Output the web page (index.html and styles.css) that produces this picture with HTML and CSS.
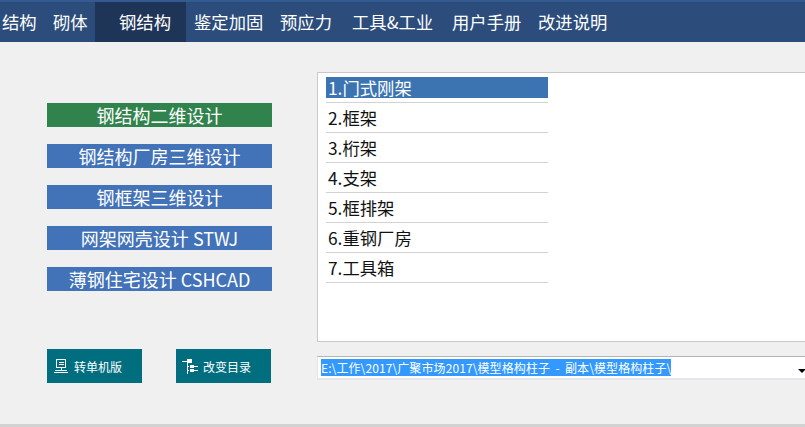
FILE: index.html
```html
<!DOCTYPE html>
<html lang="zh-CN">
<head>
<meta charset="utf-8">
<title>钢结构</title>
<link rel="stylesheet" href="styles.css">
</head>
<body>
<div class="app">
  <nav class="nav">
    <span class="tab t1">结构</span>
    <span class="tab t2">砌体</span>
    <span class="tab t3 active">钢结构</span>
    <span class="tab t4">鉴定加固</span>
    <span class="tab t5">预应力</span>
    <span class="tab t6">工具&amp;工业</span>
    <span class="tab t7">用户手册</span>
    <span class="tab t8">改进说明</span>
  </nav>
  <main class="main">
    <div class="left">
      <div class="actions">
        <div class="action green">钢结构二维设计</div>
        <div class="action">钢结构厂房三维设计</div>
        <div class="action">钢框架三维设计</div>
        <div class="action">网架网壳设计 STWJ</div>
        <div class="action">薄钢住宅设计 CSHCAD</div>
      </div>
      <div class="tools">
        <div class="tool">
          <svg class="ico" width="14" height="14" viewBox="0 0 14 14" fill="none" stroke="#fff" stroke-width="1" shape-rendering="crispEdges"><path d="M2.5 .5h9v8h-9zM4.500 3.500h5M4.500 5.500h5M7 8.500v3M1 11.500h12M0 13.500h14"/></svg>
          <span>转单机版</span>
        </div>
        <div class="tool tree">
          <svg class="ico" width="16" height="15" viewBox="0 0 16 15" fill="none" stroke="#fff" stroke-width="1" shape-rendering="crispEdges"><path d="M0 2.500h5M5.500 2.500v12M5 7.500h2M5 11.500h2M12 7.500h4M12 11.500h4"/><path d="M5 0h5v4H5zM8 6h4v3H8zM8 10h4v3H8z" fill="#fff" stroke="none"/></svg>
          <span>改变目录</span>
        </div>
      </div>
    </div>
    <div class="right">
      <div class="listbox">
        <ul class="list">
          <li class="item selected"><span>1.门式刚架</span></li>
          <li class="item"><span>2.框架</span></li>
          <li class="item"><span>3.桁架</span></li>
          <li class="item"><span>4.支架</span></li>
          <li class="item"><span>5.框排架</span></li>
          <li class="item"><span>6.重钢厂房</span></li>
          <li class="item"><span>7.工具箱</span></li>
        </ul>
      </div>
      <div class="combo">
        <span class="path">E:\工作\2017\广聚市场2017\模型格构柱子 - 副本\模型格构柱子\</span>
        <span class="arrow"></span>
      </div>
    </div>
  </main>
</div>
</body>
</html>
```
FILE: styles.css
```css
* { box-sizing: border-box; }
html, body { margin: 0; padding: 0; }
body {
  width: 805px;
  height: 427px;
  overflow: hidden;
  background: #f0f0f0;
  font-family: "Noto Sans CJK SC", "Liberation Sans", sans-serif;
}
.app {
  height: 427px;
  display: flex;
  flex-direction: column;
  border-bottom: 3px solid #d2d2d2;
}
.nav {
  height: 42px;
  flex: none;
  display: flex;
  align-items: stretch;
  background: #2c4d7b;
  border-top: 2px solid #345a92;
  color: #fff;
  font-size: 17.33px;
}
.tab {
  display: flex;
  align-items: center;
  padding-bottom: 1px;
  white-space: nowrap;
}
.t1 { width: 53px; padding-left: 2px; }
.t2 { width: 42px; }
.t3 { width: 91px; padding-left: 24px; }
.t4 { width: 94px; padding-left: 8px; }
.t5 { width: 72px; }
.t6 { width: 100px; }
.t7 { width: 86px; }
.t8 { width: 78px; }
.active { background: #1f3557; }
.main {
  flex: 1;
  display: flex;
  min-height: 0;
}
.left {
  width: 317px;
  flex: none;
  padding: 61px 0 0 47px;
}
.actions {
  display: flex;
  flex-direction: column;
  gap: 17px;
  width: 225px;
}
.action {
  height: 24px;
  display: flex;
  align-items: center;
  justify-content: center;
  background: #4272b8;
  color: #fff;
  font-size: 18px;
  line-height: 24px;
  white-space: nowrap;
}
.action.green { background: #31834d; }
.tools {
  display: flex;
  gap: 34px;
  margin-top: 58px;
}
.tool {
  width: 95px;
  height: 34px;
  display: flex;
  align-items: center;
  gap: 6px;
  padding-left: 7px;
  background: #006e7f;
  color: #fff;
  font-size: 12px;
  white-space: nowrap;
}
.tool.tree { gap: 5px; padding-left: 6px; }
.ico { flex: none; }
.right {
  flex: 1;
  min-width: 0;
  padding-top: 30px;
}
.listbox {
  height: 270px;
  background: #fff;
  border: 1px solid #c8c8c8;
  border-right: 0;
  padding: 4px 0 0 8px;
}
.list {
  list-style: none;
  margin: 0;
  padding: 0;
  width: 222px;
}
.item {
  height: 30px;
  padding-bottom: 4px;
  border-bottom: 1px solid #d2d2d2;
  font-size: 17.33px;
  color: #111;
  display: flex;
  align-items: stretch;
}
.item span {
  flex: 1;
  padding: 4px 0 0 2px;
  line-height: 21px;
  white-space: nowrap;
}
.item.selected { height: 26px; }
.item.selected span { padding-top: 0; background: #3b74b1; color: #fff; }
.combo {
  margin-top: 14px;
  height: 24px;
  background: #fff;
  border-top: 1px solid #b4b4b4;
  border-left: 1px solid #e3e6ea;
  border-bottom: 2px solid #e3e6ea;
  display: flex;
  align-items: flex-start;
  justify-content: space-between;
  padding: 2px 0 0 3px;
}
.path {
  height: 17px;
  line-height: 17px;
  font-size: 12px;
  word-spacing: 2.5px;
  letter-spacing: 0.1px;
  background: #3399ff;
  color: #fff;
  white-space: nowrap;
}
.arrow {
  width: 0;
  height: 0;
  margin-top: 10px;
  border: 4px solid transparent;
  border-top: 4px solid #000;
  border-bottom: 0;
  margin-right: -1px;
}
```
